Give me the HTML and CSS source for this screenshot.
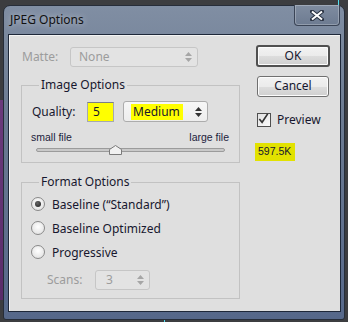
FILE: index.html
```html
<!DOCTYPE html>
<html>
    <head>
        <title>JPEG Options</title>
        <link rel="stylesheet" href="styles.css">
    </head>
    <body>
        <div class="window">
            <div class="titlebar">
                <span class="title">JPEG Options</span>
                <div class="close">
                    <svg width="14" height="11" viewBox="0 0 14 11">
                        <path d="M2 1.5 L12 9.5 M12 1.5 L2 9.5" stroke="#2b3444" stroke-width="4" stroke-linecap="square"/>
                        <path d="M2 1.5 L12 9.5 M12 1.5 L2 9.5" stroke="#fff" stroke-width="2"/>
                    </svg>
                </div>
            </div>

            <div class="client">
                <!-- left side: matte + the two group boxes -->
                <div class="main">
                    <div class="row matte_row">
                        <span class="label disabled matte_label">Matte:</span>
                        <div class="select disabled matte_select">
                            <span>None</span>
                            <svg class="spin" width="7" height="10" viewBox="0 0 7 10"><path d="M3.5 0 L7 4 L0 4 Z M0 6 L7 6 L3.5 10 Z"/></svg>
                        </div>
                    </div>

                    <fieldset class="group image_group">
                        <legend>Image Options</legend>
                        <div class="row quality_row">
                            <span class="label quality_label">Quality:</span>
                            <div class="textbox">5</div>
                            <div class="select quality_select">
                                <span class="hilite">Medium</span>
                                <svg class="spin" width="7" height="10" viewBox="0 0 7 10"><path d="M3.5 0 L7 4 L0 4 Z M0 6 L7 6 L3.5 10 Z"/></svg>
                            </div>
                        </div>
                        <div class="scale_labels">
                            <span>small file</span>
                            <span>large file</span>
                        </div>
                        <div class="slider">
                            <div class="track"></div>
                            <svg class="thumb" width="13" height="10" viewBox="0 0 13 10">
                                <path d="M0.5 4.5 L6.5 0.5 L12.5 4.5 L12.5 9.5 L0.5 9.5 Z" fill="#f1f1f1" stroke="#7a7a7a"/>
                            </svg>
                        </div>
                    </fieldset>

                    <fieldset class="group format_group">
                        <legend>Format Options</legend>
                        <div class="radio_row">
                            <span class="radio checked"></span>
                            <span>Baseline (&ldquo;Standard&rdquo;)</span>
                        </div>
                        <div class="radio_row">
                            <span class="radio"></span>
                            <span>Baseline Optimized</span>
                        </div>
                        <div class="radio_row">
                            <span class="radio"></span>
                            <span>Progressive</span>
                        </div>
                        <div class="row scans_row">
                            <span class="label disabled scans_label">Scans:</span>
                            <div class="select disabled scans_select">
                                <span>3</span>
                                <svg class="spin" width="7" height="10" viewBox="0 0 7 10"><path d="M3.5 0 L7 4 L0 4 Z M0 6 L7 6 L3.5 10 Z"/></svg>
                            </div>
                        </div>
                    </fieldset>
                </div>

                <!-- right side: buttons + preview -->
                <div class="side">
                    <div class="button default">OK</div>
                    <div class="button cancel">Cancel</div>
                    <div class="check_row">
                        <span class="checkbox">
                            <svg width="14" height="14" viewBox="0 0 14 14">
                                <path d="M2.5 7 L5.5 10.5 L11.5 1.5" fill="none" stroke="#333" stroke-width="1.8"/>
                            </svg>
                        </span>
                        <span>Preview</span>
                    </div>
                    <div class="filesize">597.5K</div>
                </div>
            </div>
        </div>
    </body>
</html>
```

FILE: styles.css
```css
body {
    margin: 0;
    width: 348px;
    height: 322px;
    overflow: hidden;
    background:
        linear-gradient(#52e0f0, #52e0f0) 338px 0 / 1px 5px no-repeat,
        linear-gradient(#52e0f0, #52e0f0) 164px 318px / 1px 4px no-repeat,
        linear-gradient(#6b3a7c, #5a2c6a) 0 100px / 3px 200px no-repeat,
        #3c3d40;
    font-family: "Noto Sans", "Liberation Sans", sans-serif;
    font-size: 12px;
    color: #17172e;
}
.window {
    box-sizing: border-box;
    margin: 5px 0 0 3px;
    width: 342px;
    height: 315px;
    border: 1px solid #262d39;
    border-radius: 7px 7px 3px 3px;
    padding: 0 3px 7px 4px;
    background: linear-gradient(180deg, #808ea3 0%, #6c7b92 35%, #56688a 100%);
    display: flex;
    flex-direction: column;
}
.titlebar {
    height: 28px;
    display: flex;
    align-items: flex-start;
}
.title {
    padding: 6px 0 0 2px;
    line-height: 16px;
    font-size: 12px;
    color: #111;
    text-shadow: 0 0 6px rgba(255, 255, 255, 0.6);
}
.close {
    box-sizing: border-box;
    margin: -1px 1px 0 auto;
    width: 46px;
    height: 21px;
    border: 1px solid #3a4456;
    border-top: none;
    border-radius: 0 0 4px 4px;
    background: linear-gradient(#7f8ca0, #6d7b91);
    box-shadow: inset 0 0 0 1px rgba(255, 255, 255, 0.25);
    display: flex;
    align-items: center;
    justify-content: center;
}
.client {
    box-sizing: border-box;
    flex: 1;
    border: 1px solid #1e2839;
    background: #dfdfdf;
    box-shadow: inset 1px 1px 0 #f4f4f4;
    display: flex;
    padding: 12px 0 0 12px;
}
.main {
    width: 219px;
}
.side {
    margin-left: 17px;
    display: flex;
    flex-direction: column;
    align-items: flex-start;
}
.row {
    display: flex;
    align-items: center;
}
.label {
    line-height: 16px;
}
.disabled {
    color: #9c9c9c;
}
.select {
    box-sizing: border-box;
    height: 20px;
    border: 1px solid #acacac;
    border-radius: 3px;
    background: linear-gradient(#f7f7f7, #ededed);
    display: flex;
    align-items: center;
    justify-content: space-between;
    line-height: 16px;
}
.select.disabled {
    border-color: #c6c6c6;
    background: #e3e3e3;
}
.spin {
    fill: #333;
    margin-right: 5px;
}
.select.disabled .spin {
    fill: #a6a6a6;
}

.matte_row {
    height: 20px;
}
.matte_label {
    margin-left: 1px;
    width: 48px;
}
.matte_select {
    width: 128px;
    padding-left: 8px;
}

.group {
    margin: 0;
    border: 1px solid #c2c2c2;
    padding: 0 10px;
}
.group legend {
    margin-left: 7px;
    padding: 0 2px;
    line-height: 16px;
}
.image_group {
    margin-top: 10px;
    padding-top: 8px;
    padding-bottom: 8px;
}
.quality_row {
    height: 21px;
}
.quality_label {
    width: 55px;
}
.textbox {
    box-sizing: border-box;
    width: 27px;
    height: 20px;
    border: 1px solid #a5a9b0;
    border-top-color: #7b7f86;
    background: #ffff00;
    padding-left: 5px;
    line-height: 18px;
}
.quality_select {
    margin-left: 9px;
    width: 85px;
    height: 21px;
    padding-left: 7px;
}
.hilite {
    background: #ffff00;
    padding: 0 3px 0 2px;
}
.scale_labels {
    margin: 9px 0 0 -1px;
    display: flex;
    justify-content: space-between;
    font-family: "Liberation Sans", sans-serif;
    font-size: 10.5px;
    line-height: 12px;
    color: #1c1c3c;
}
.slider {
    position: relative;
    margin: 1px 4px 0 4px;
    height: 10px;
}
.track {
    position: absolute;
    top: 4px;
    left: 0;
    right: 0;
    height: 4px;
    box-sizing: border-box;
    border: 1px solid #9b9b9b;
    border-radius: 2px;
    background: #c9c9c9;
}
.thumb {
    position: absolute;
    top: 1px;
    left: 73px;
}

.format_group {
    margin-top: 11px;
    padding-top: 2px;
    padding-bottom: 8px;
}
.radio_row {
    height: 24px;
    display: flex;
    align-items: center;
}
.radio {
    box-sizing: border-box;
    width: 14px;
    height: 14px;
    margin: 0 7px 0 -1px;
    border: 1px solid #8a8a8a;
    border-radius: 50%;
    background: radial-gradient(circle at 50% 40%, #ffffff, #e6e6e6 70%, #d4d4d4);
    display: flex;
    align-items: center;
    justify-content: center;
}
.radio.checked::after {
    content: "";
    width: 6px;
    height: 6px;
    border-radius: 50%;
    background: radial-gradient(circle at 40% 35%, #666, #1e1e1e);
}
.scans_row {
    margin-top: 6px;
    height: 20px;
}
.scans_label {
    margin-left: 15px;
    width: 48px;
}
.scans_select {
    width: 55px;
    padding-left: 10px;
}

.button {
    box-sizing: border-box;
    width: 72px;
    height: 21px;
    border: 1px solid #707070;
    border-radius: 3px;
    background: linear-gradient(#f2f2f2 0%, #ebebeb 50%, #dddddd 51%, #cfcfcf 100%);
    box-shadow: inset 0 0 0 1px #fcfcfc;
    text-align: center;
    line-height: 18px;
}
.button.default {
    margin: -2px 0 0 -1px;
    width: 74px;
    height: 22px;
    border: 2px solid #505050;
}
.cancel {
    margin-top: 9px;
}
.check_row {
    margin-top: 16px;
    height: 14px;
    display: flex;
    align-items: center;
    line-height: 16px;
}
.checkbox {
    box-sizing: border-box;
    width: 14px;
    height: 14px;
    margin-right: 6px;
    border: 1px solid #4f4f4f;
    background: linear-gradient(135deg, #e2e2e2, #fbfbfb);
    display: flex;
}
.checkbox svg {
    margin: -2px 0 0 -1px;
}
.filesize {
    margin: 16px 0 0 -2px;
    padding: 0 4px 0 3px;
    height: 18px;
    background: #e2e200;
    font-family: "Liberation Sans", sans-serif;
    font-size: 10.5px;
    line-height: 16px;
}
```
